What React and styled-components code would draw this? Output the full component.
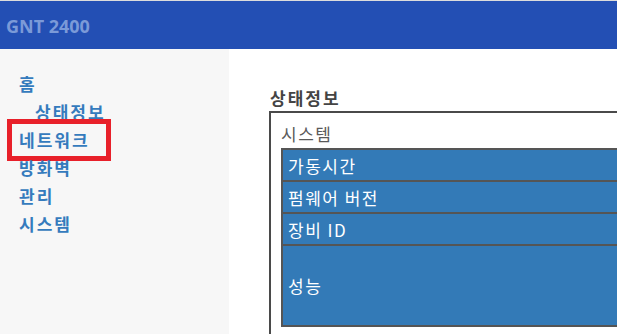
import styled, { createGlobalStyle } from "styled-components";

const GlobalStyle = createGlobalStyle`
  html, body {
    margin: 0;
    padding: 0;
    overflow: hidden;
    background: #ffffff;
  }
  body {
    font-family: "Noto Sans CJK KR", "Noto Sans", sans-serif;
  }
`;

const menu = [
  { label: "홈", sub: false },
  { label: "상태정보", sub: true },
  { label: "네트워크", sub: false, marked: true },
  { label: "방화벽", sub: false },
  { label: "관리", sub: false },
  { label: "시스템", sub: false },
];

const rows = [
  { label: "가동시간", tall: false },
  { label: "펌웨어 버전", tall: false },
  { label: "장비 ID", tall: false },
  { label: "성능", tall: true },
];

export default function App() {
  return (
    <>
      <GlobalStyle />
      <Page>
        <Header>
          <Brand>GNT 2400</Brand>
        </Header>
        <Body>
          <Sidebar>
            {menu.map((m) => (
              <MenuItem key={m.label} sub={m.sub}>
                {m.label}
                {m.marked && <Highlight />}
              </MenuItem>
            ))}
          </Sidebar>
          <Main>
            <Title>상태정보</Title>
            <Fieldset>
              <Group>시스템</Group>
              <Table>
                <tbody>
                  {rows.map((r) => (
                    <tr key={r.label}>
                      <Cell tall={r.tall}>{r.label}</Cell>
                    </tr>
                  ))}
                </tbody>
              </Table>
            </Fieldset>
          </Main>
        </Body>
      </Page>
    </>
  );
}

const Page = styled.div`
  width: 617px;
  height: 334px;
  display: flex;
  flex-direction: column;
  border-top: 1px solid #dcdcdc;
  box-sizing: border-box;
  overflow: hidden;
`;

const Header = styled.div`
  height: 48px;
  flex-shrink: 0;
  background: #234fb4;
  display: flex;
  align-items: center;
  padding-left: 6px;
`;

const Brand = styled.div`
  font-family: "Noto Sans", "Open Sans", sans-serif;
  font-weight: 700;
  font-size: 18px;
  color: #7b9ad8;
  margin-top: 2px;
`;

const Body = styled.div`
  flex: 1;
  display: flex;
`;

const Sidebar = styled.div`
  width: 229px;
  flex-shrink: 0;
  background: #f7f7f7;
  padding-top: 21px;
  box-sizing: border-box;
`;

const MenuItem = styled.div`
  position: relative;
  height: 28px;
  line-height: 28px;
  padding-left: ${(p) => (p.sub ? "35px" : "19px")};
  font-size: 17px;
  font-weight: 700;
  letter-spacing: 2px;
  color: #357bbd;
`;

const Highlight = styled.span`
  position: absolute;
  left: 7px;
  top: -7px;
  width: 104px;
  height: 42px;
  border: 5px solid #e8202a;
  box-sizing: border-box;
`;

const Main = styled.div`
  flex: 1;
  padding: 38px 0 0 40px;
  min-width: 0;
`;

const Title = styled.div`
  font-size: 17px;
  font-weight: 700;
  letter-spacing: 2px;
  color: #444444;
  line-height: 22px;
  height: 24px;
  padding-left: 1px;
`;

const Fieldset = styled.div`
  width: 400px;
  height: 240px;
  border: 2px solid #4a4a4a;
  border-right: none;
  border-bottom: none;
  padding: 9px 0 0 10px;
  box-sizing: border-box;
`;

const Group = styled.div`
  font-size: 17px;
  letter-spacing: 1.5px;
  color: #5a5a5a;
  line-height: 24px;
  height: 26px;
`;

const Table = styled.table`
  width: 400px;
  border-collapse: collapse;
  border: 2px solid #555555;
`;

const Cell = styled.td`
  background: #337ab7;
  color: #ffffff;
  font-size: 17px;
  letter-spacing: 1.5px;
  height: ${(p) => (p.tall ? "79px" : "30px")};
  padding: 0 0 0 5px;
  border: 2px solid #555555;
  border-right: none;
  vertical-align: middle;
`;
